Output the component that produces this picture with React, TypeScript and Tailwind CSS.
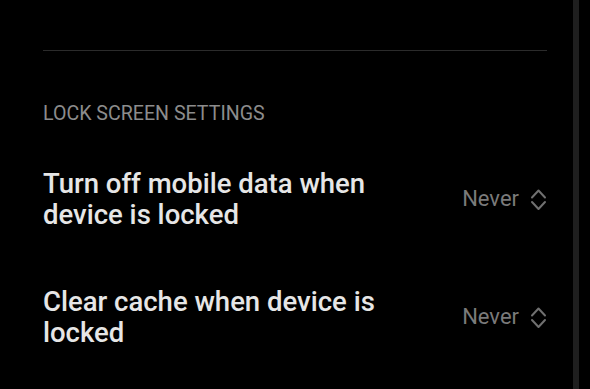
import React from "react";

function Chevrons() {
  return (
    <svg width="17" height="23" viewBox="0 0 17 23" fill="none" className="shrink-0">
      <polyline points="2,9.5 8.5,2.5 15,9.5" stroke="#707070" strokeWidth="2" strokeLinecap="round" strokeLinejoin="round" />
      <polyline points="2,14 8.5,21 15,14" stroke="#707070" strokeWidth="2" strokeLinecap="round" strokeLinejoin="round" />
    </svg>
  );
}

function Row({ title }: { title: React.ReactNode }) {
  return (
    <div className="flex items-center justify-between py-[28px]">
      <div className="text-[27.5px] leading-[31px] font-medium text-[#e6e6e6] w-[360px]">{title}</div>
      <div className="flex items-center gap-[11px]">
        <span className="text-[22px] leading-[26px] text-[#7a7a7a]">Never</span>
        <Chevrons />
      </div>
    </div>
  );
}

export default function App() {
  return (
    <div
      className="flex w-[590px] h-[389px] bg-black overflow-hidden"
      style={{ fontFamily: "Roboto, 'Noto Sans', sans-serif" }}
    >
      <div className="flex-1 pl-[43px] pr-[26px] pt-[50px]">
        <div className="h-px bg-[#2b2b2b]" />
        <div className="mt-[51px] text-[19.6px] leading-[24px] text-[#8c8c8c]">LOCK SCREEN SETTINGS</div>
        <div className="mt-[14px]">
          <Row title={<>Turn off mobile data when<br />device is locked</>} />
          <Row title={<>Clear cache when device is<br />locked</>} />
        </div>
      </div>
      <div className="w-[6px] bg-[#1f1f1f]" />
      <div className="w-[11px]" />
    </div>
  );
}
